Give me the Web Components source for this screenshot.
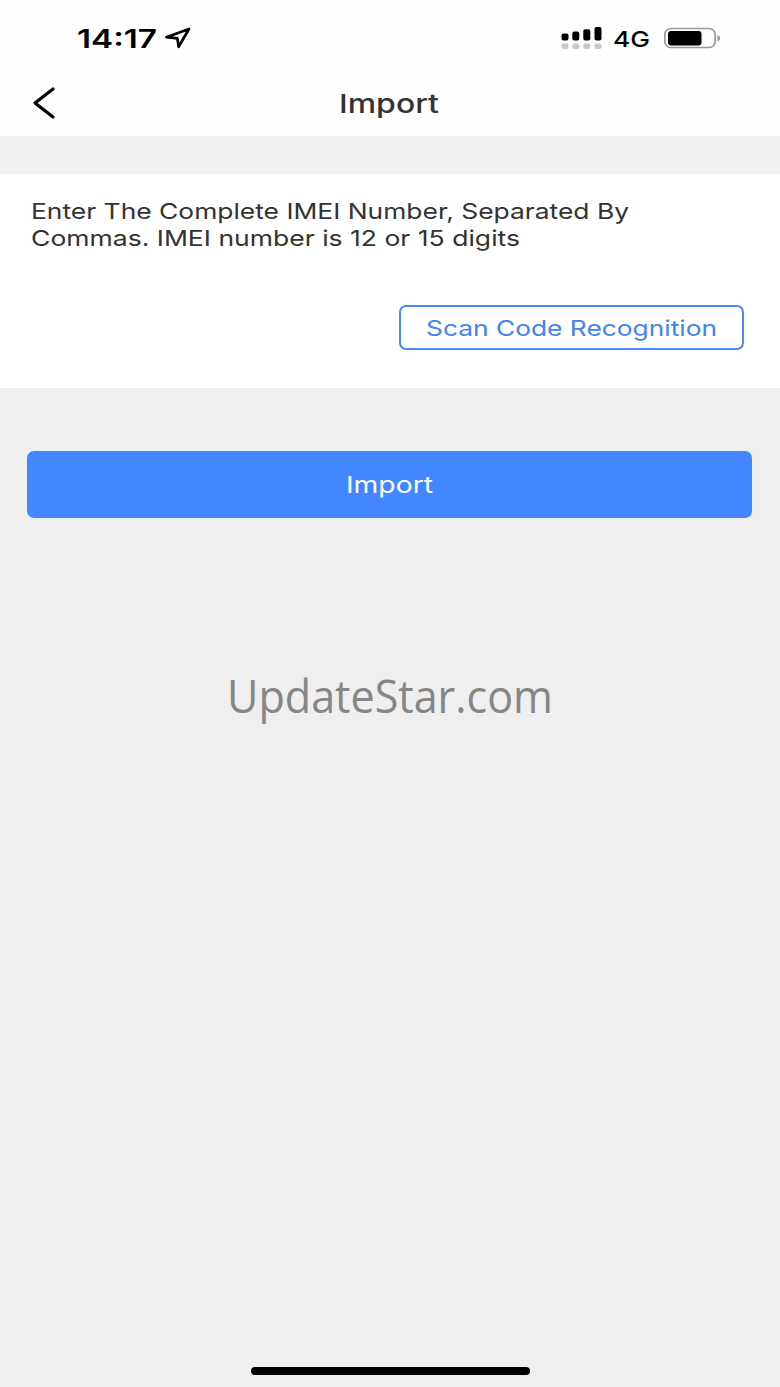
<!DOCTYPE html>
<html lang="en">
<head>
<meta charset="utf-8">
<meta name="viewport" content="width=device-width, initial-scale=1">
<title>Import</title>
<style>
  html, body {
    margin: 0;
    height: 100%;
  }
  body {
    font-family: Inter, "Liberation Sans", sans-serif;
    background: #efefef;
    color: #333;
  }
</style>
</head>
<body>
<import-page></import-page>

<script>
// Single line of text widened to the given width
class WideText extends HTMLElement {
  constructor () {
    super()
    this.attachShadow({ mode: 'open' })
    this.shadowRoot.innerHTML = `
      <style>
        :host {
          display: block;
          flex: none;
          text-align: left;
          white-space: nowrap;
        }
        span {
          display: inline-block;
          vertical-align: top;
          transform-origin: 0 50%;
        }
      </style>
      <span><slot></slot></span>
    `
  }

  connectedCallback () {
    const width = Number(this.getAttribute('width'))
    const span = this.shadowRoot.querySelector('span')
    this.style.width = `${width}px`
    span.style.transform = `scaleX(${width / span.getBoundingClientRect().width})`
  }
}

class StatusBar extends HTMLElement {
  constructor () {
    super()
    this.attachShadow({ mode: 'open' })
    this.shadowRoot.innerHTML = `
      <style>
        :host {
          display: flex;
          align-items: center;
          box-sizing: border-box;
          height: 76px;
          padding: 0 59px 0 77px;
          color: #000;
        }
        svg {
          display: block;
          flex: none;
        }
        .time {
          margin-top: 2px;
          font-size: 26px;
          font-weight: 600;
          line-height: 32px;
        }
        .arrow {
          margin-left: 7px;
        }
        .right {
          display: flex;
          align-items: center;
          margin-left: auto;
        }
        .net {
          font-size: 22px;
          font-weight: 500;
          line-height: 28px;
          margin: 2px 13px 0 11px;
        }
      </style>
      <wide-text class="time" width="80">14:17</wide-text>
      <svg class="arrow" width="28" height="24" viewBox="0 0 28 24" fill="none" stroke="#000" stroke-width="2.7" stroke-linejoin="round">
        <path d="M2.4 11.2 25 3 14.6 20.8 13.4 12.4Z"/>
      </svg>
      <div class="right">
        <svg width="41" height="24" viewBox="0 0 41 24">
          <rect x="0.5" y="7.5" width="7" height="7" rx="2"/>
          <rect x="11.3" y="5.5" width="7" height="9" rx="2"/>
          <rect x="22.3" y="3.3" width="7" height="11.2" rx="2"/>
          <rect x="33.5" y="1" width="7" height="13.5" rx="2"/>
          <g fill="#c9c9c9">
            <rect x="0.5" y="17.5" width="7" height="5.5" rx="2"/>
            <rect x="11.3" y="17.5" width="7" height="5.5" rx="2"/>
            <rect x="22.3" y="17.5" width="7" height="5.5" rx="2"/>
            <rect x="33.5" y="17.5" width="7" height="5.5" rx="2"/>
          </g>
        </svg>
        <wide-text class="net" width="37">4G</wide-text>
        <svg width="58" height="24" viewBox="0 0 58 24">
          <rect x="1.8" y="2.5" width="50.4" height="19" rx="6" fill="none" stroke="#999" stroke-width="1.7"/>
          <rect x="5" y="5" width="33.500" height="14.5" rx="3"/>
          <path d="M54.5 9v6.500c1.700-.4 2.600-1.800 2.600-3.250s-.9-2.850-2.600-3.250Z" fill="#999"/>
        </svg>
      </div>
    `
  }
}

class NavBar extends HTMLElement {
  constructor () {
    super()
    this.attachShadow({ mode: 'open' })
    this.shadowRoot.innerHTML = `
      <style>
        :host {
          display: grid;
          grid-template-columns: 80px 1fr 80px;
          align-items: center;
          height: 60px;
          font-size: 26px;
          font-weight: 500;
          line-height: 32px;
        }
        button {
          display: block;
          border: 0;
          padding: 0 0 0 32px;
          background: none;
        }
        svg {
          display: block;
        }
        .title {
          display: flex;
          justify-content: center;
          margin: -4px 2px 0 0;
        }
      </style>
      <button aria-label="Back">
        <svg width="24" height="46" viewBox="0 0 24 46" fill="none" stroke="#000" stroke-width="3.2" stroke-linecap="round" stroke-linejoin="round">
          <path d="M21 6 3 20 21 34"/>
        </svg>
      </button>
      <div class="title"><slot></slot></div>
    `
  }
}

class ImeiCard extends HTMLElement {
  constructor () {
    super()
    this.attachShadow({ mode: 'open' })
    this.shadowRoot.innerHTML = `
      <style>
        :host {
          display: flex;
          flex-direction: column;
          box-sizing: border-box;
          height: 214px;
          margin-top: 38px;
          padding: 24px 36px 38px 31px;
          background: #fff;
          font-size: 22px;
          line-height: 27px;
        }
        .action {
          display: flex;
          justify-content: flex-end;
          margin-top: auto;
        }
      </style>
      <slot></slot>
      <div class="action"><slot name="action"></slot></div>
    `
  }
}

class AppButton extends HTMLElement {
  constructor () {
    super()
    this.attachShadow({ mode: 'open' })
    this.shadowRoot.innerHTML = `
      <style>
        :host {
          display: block;
        }
        button {
          display: flex;
          align-items: center;
          justify-content: center;
          box-sizing: border-box;
          width: 100%;
          height: 67px;
          border: 0;
          border-radius: 7px;
          padding: 0;
          background: #4287ff;
          color: #fff;
          font: 23.5px/30px Inter, "Liberation Sans", sans-serif;
        }
        :host([outline]) button {
          width: 345px;
          height: 45px;
          border: 2px solid #4c8bf0;
          border-radius: 7px;
          background: #fff;
          color: #4484ee;
          font-size: 22px;
        }
      </style>
      <button><slot></slot></button>
    `
  }
}

class ImportPage extends HTMLElement {
  constructor () {
    super()
    this.attachShadow({ mode: 'open' })
    this.shadowRoot.innerHTML = `
      <style>
        :host {
          display: flex;
          flex-direction: column;
          box-sizing: border-box;
          width: 780px;
          height: 1387px;
          padding-bottom: 12px;
        }
        header {
          background: #fefefe;
        }
        .submit {
          margin: 63px 28px 0 27px;
        }
        .watermark {
          align-self: center;
          margin-top: 148px;
          color: #868686;
          font: 45px/60px "Open Sans", "Noto Sans", sans-serif;
        }
        .home {
          align-self: center;
          width: 279px;
          height: 8px;
          margin-top: auto;
          border-radius: 4px;
          background: #000;
        }
      </style>
      <header>
        <status-bar></status-bar>
        <nav-bar><wide-text width="100">Import</wide-text></nav-bar>
      </header>
      <imei-card>
        <wide-text width="598">Enter The Complete IMEI Number, Separated By</wide-text>
        <wide-text width="489">Commas. IMEI number is 12 or 15 digits</wide-text>
        <app-button slot="action" outline><wide-text width="291">Scan Code Recognition</wide-text></app-button>
      </imei-card>
      <app-button class="submit"><wide-text width="87">Import</wide-text></app-button>
      <wide-text class="watermark" width="326">UpdateStar.com</wide-text>
      <div class="home"></div>
    `
  }
}

customElements.define('wide-text', WideText)
customElements.define('status-bar', StatusBar)
customElements.define('nav-bar', NavBar)
customElements.define('imei-card', ImeiCard)
customElements.define('app-button', AppButton)
customElements.define('import-page', ImportPage)
</script>
</body>
</html>
